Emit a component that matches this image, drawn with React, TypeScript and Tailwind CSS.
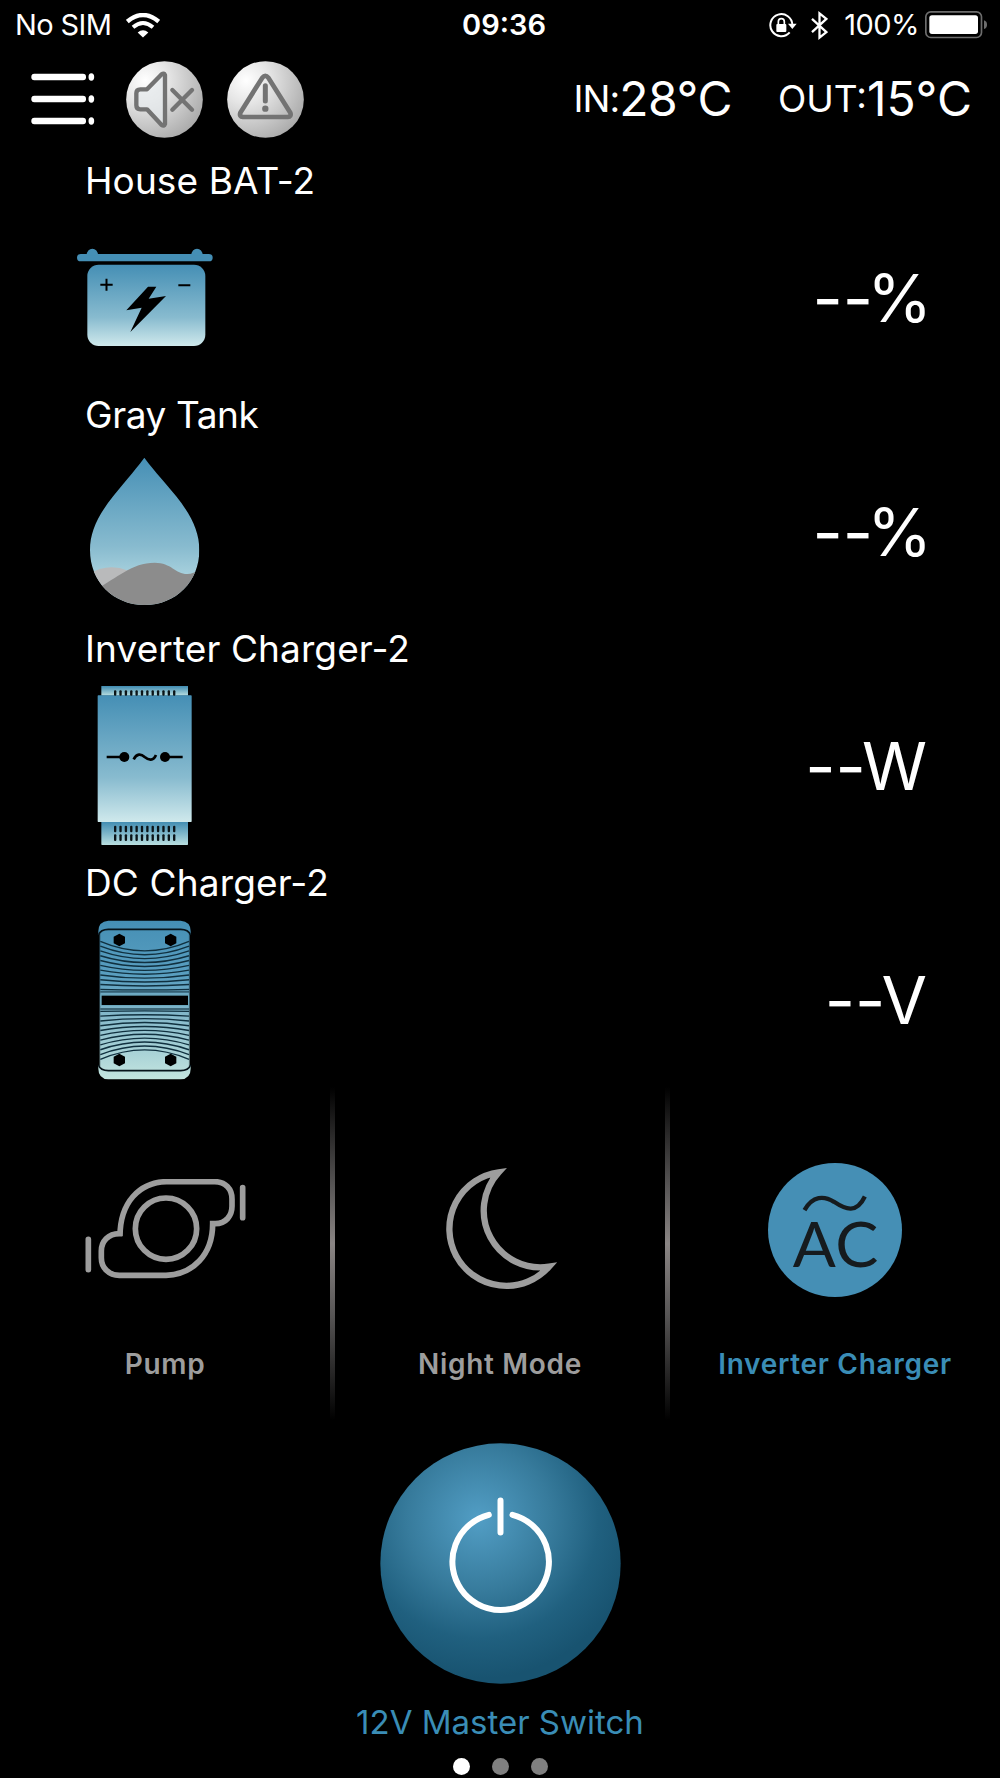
import type { ReactNode } from "react";

// --- Types ---
type Device = {
  name: string;
  unit: string;
  viewBox: string;
  icon: ReactNode;
  nameClass: string;
  unitClass: string;
};

const SLOTS = Array.from({ length: 12 }, (_, i) => 162 + i * 16.1);
const RIBS = Array.from({ length: 11 }, (_, i) => i);
const BOLTS = [
  [178, 240],
  [332, 240],
  [178, 600],
  [332, 600],
];

// --- Status bar icons ---
const WifiIcon = () => (
  <svg viewBox="0 0 102 74" className="ml-[15px] h-[25px] w-[34px]" fill="none" stroke="#fff">
    <path d="M4 25 Q51 -14 98 25" strokeWidth="13" />
    <path d="M21 42 Q51 17 81 42" strokeWidth="12" />
    <path d="M35 58 Q51 44 67 58 L51 73Z" fill="#fff" stroke="none" />
  </svg>
);

const RotationLockIcon = () => (
  <svg viewBox="0 0 84 78" className="h-[26px] w-[28px]" fill="none" stroke="#fff">
    <path d="M70 39 A33 33 0 1 0 62 61" strokeWidth="6" />
    <path d="M57 35 H83 L70 51Z" fill="#fff" stroke="none" />
    <rect x="22" y="36" width="30" height="24" rx="3" fill="#fff" stroke="none" />
    <path d="M28 38 V29 Q28 20 37 20 Q46 20 46 29 V38" strokeWidth="5" />
  </svg>
);

const BluetoothIcon = () => (
  <svg viewBox="0 0 52 88" className="h-[29px] w-[17px]" fill="none" stroke="#fff" strokeWidth="7">
    <path d="M3 24 L47 64 L26 81 V7 L47 24 L3 64" />
  </svg>
);

const BatteryIcon = () => (
  <svg viewBox="0 0 192 84" className="h-[28px] w-[64px]">
    <rect x="2.5" y="2.5" width="167" height="77" rx="15" fill="none" stroke="#6d6d6d" strokeWidth="5" />
    <rect x="13" y="13" width="146" height="56" rx="8" fill="#fff" />
    <path d="M177 28 Q186 31 186 41 Q186 51 177 54Z" fill="#6d6d6d" />
  </svg>
);

// --- Header icons ---
const MenuIcon = () => (
  <svg viewBox="0 0 192 156" className="h-[52px] w-[64px]" fill="#fff">
    {[12, 78, 144].map((y) => (
      <g key={y}>
        <rect x="1" y={y - 10} width="164" height="20" rx="9" />
        <ellipse cx="181" cy={y} rx="8.5" ry="11" />
      </g>
    ))}
  </svg>
);

const SilverDisc = ({ id, children }: { id: string; children: ReactNode }) => (
  <svg viewBox="0 0 231 231" className="h-[77px] w-[77px]">
    <defs>
      <radialGradient id={id} cx="0.25" cy="0.25" r="0.85">
        <stop offset="0" stopColor="#ffffff" />
        <stop offset="0.35" stopColor="#e6e6e6" />
        <stop offset="1" stopColor="#ababab" />
      </radialGradient>
    </defs>
    <circle cx="115.5" cy="115.5" r="115" fill={`url(#${id})`} />
    {children}
  </svg>
);

const MuteIcon = () => (
  <SilverDisc id="disc-mute">
    <g fill="none" stroke="#737373" strokeWidth="13" strokeLinejoin="round" strokeLinecap="round">
      <path
        fill="#e5eaec"
        fillOpacity="0.7"
        d="M31 97 Q31 85 43 85 H63 L107 40 Q114 35 117 42 V189 Q114 197 107 192 L63 145 H43 Q31 145 31 133Z"
      />
      <path d="M139 87 L198 146 M198 87 L139 146" />
    </g>
  </SilverDisc>
);

const WarningIcon = () => (
  <SilverDisc id="disc-warning">
    <g fill="none" stroke="#737373" strokeWidth="14" strokeLinejoin="round" strokeLinecap="round">
      <path d="M106 50 Q115 39 124 50 L190 155 Q194 167 182 168 H48 Q36 167 40 155Z" />
      <path d="M115 74 V120" strokeWidth="15" />
      <circle cx="115" cy="143" r="9.5" fill="#737373" stroke="none" />
    </g>
  </SilverDisc>
);

// --- Device icons ---
const BlueFade = ({ id }: { id: string }) => (
  <linearGradient id={id} x1="0" y1="0" x2="0" y2="1">
    <stop offset="0" stopColor="#458fb5" />
    <stop offset="0.65" stopColor="#88bbcf" />
    <stop offset="1" stopColor="#cfe9ec" />
  </linearGradient>
);

const HouseBattery = (
  <>
    <defs>
      <BlueFade id="battery-fill" />
    </defs>
    <g fill="#458fb5">
      <rect x="51" y="72" width="407" height="22" rx="11" />
      <path d="M80 76 A17 20 0 0 1 114 76Z M394 76 A17 20 0 0 1 428 76Z" />
    </g>
    <rect x="82" y="104" width="354" height="244" rx="34" fill="url(#battery-fill)" />
    <path d="M121 164 H158 M139.500 146 V182 M355 166 H391" stroke="#000" strokeWidth="6" />
    <path d="M264 170 H289 L266 206 L318 198 L211 306 L245 233 L199 241Z" />
  </>
);

const GrayTank = (
  <>
    <defs>
      <linearGradient id="tank-fill" x1="0" y1="0" x2="0" y2="1">
        <stop offset="0" stopColor="#458fb5" />
        <stop offset="0.6" stopColor="#88bbcf" />
        <stop offset="0.8" stopColor="#a9d2de" />
      </linearGradient>
      <clipPath id="tank-shape">
        <path d="M253 203 C218 250 190 280 160 318 C114 376 90 425 90 480 C90 575 160 645 254 645 C348 645 418 575 418 480 C418 425 394 376 348 318 C318 280 288 250 253 203Z" />
      </clipPath>
    </defs>
    <g clipPath="url(#tank-shape)">
      <rect x="80" y="200" width="350" height="450" fill="url(#tank-fill)" />
      <path d="M90 550 Q145 518 205 542 L150 620 H90Z" fill="#b9babb" />
      <path d="M110 596 C170 565 215 518 284 518 C335 518 345 552 382 552 Q400 552 420 538 V650 H110Z" fill="#8c8c8c" />
    </g>
  </>
);

const InverterCharger = (
  <>
    <defs>
      <BlueFade id="inverter-fill" />
      <linearGradient id="inverter-cap" x1="0" y1="0" x2="0" y2="1">
        <stop offset="0" stopColor="#3f8bb1" />
        <stop offset="1" stopColor="#b9dfe0" />
      </linearGradient>
    </defs>
    <rect x="124" y="198" width="260" height="29" fill="url(#inverter-cap)" />
    <rect x="124" y="604" width="260" height="71" rx="2" fill="url(#inverter-cap)" />
    <rect x="113" y="226" width="282" height="380" rx="2" fill="url(#inverter-fill)" />
    {SLOTS.map((x) => (
      <g key={x} fill="#0b1418">
        <rect x={x} y="211" width="7" height="16" rx="3" />
        <rect x={x} y="617" width="7" height="20" rx="3" />
        <rect x={x} y="643" width="7" height="20" rx="3" />
      </g>
    ))}
    <path d="M140 411 H190 M318 411 H368" stroke="#000" strokeWidth="8" />
    <circle cx="193" cy="411" r="15" />
    <circle cx="315" cy="411" r="15" />
    <path d="M221 418 C230 400 243 401 254 411 C266 421 280 424 288 405" fill="none" stroke="#000" strokeWidth="8" />
  </>
);

const DcCharger = (
  <>
    <defs>
      <linearGradient id="dc-fill" x1="0" y1="0" x2="0" y2="1">
        <stop offset="0" stopColor="#458fb5" />
        <stop offset="0.35" stopColor="#5a9fc0" />
        <stop offset="0.6" stopColor="#85b9cb" />
        <stop offset="1" stopColor="#c3e5df" />
      </linearGradient>
    </defs>
    <path
      fill="url(#dc-fill)"
      d="M145 182 H362 Q392 184 392 214 V222 H389 V617 H392 V626 Q392 656 362 658 H145 Q115 656 115 626 V617 H119 V222 H115 V214 Q115 184 145 182Z"
    />
    <g fill="none" stroke="#07141b" strokeWidth="5">
      <path d="M115 225 Q122 208 145 208 H362 Q385 208 392 225 M115 615 Q122 632 145 632 H362 Q385 632 392 615" />
      <path d="M120 220 V620 M388 220 V620" strokeWidth="2" opacity="0.5" />
    </g>
    <g fill="none" stroke="#10303f" strokeWidth="4.2">
      {RIBS.map((i) => {
        const edge = 244 + i * 14.4;
        const ctrl = 301 + i * 9;
        return (
          <g key={i}>
            <path d={`M121 ${edge} Q254 ${ctrl} 387 ${edge}`} />
            <path d={`M121 ${842 - edge} Q254 ${842 - ctrl} 387 ${842 - edge}`} />
          </g>
        );
      })}
      <path d="M121 395 H387 M121 447 H387" strokeWidth="6" opacity="0.6" />
    </g>
    <rect x="121" y="403" width="266" height="35" fill="#6aa7bd" />
    <rect x="125" y="407" width="259" height="28" />
    {BOLTS.map(([x, y]) => (
      <path key={`${x}-${y}`} d={`M${x} ${y - 19} l17 9.500 v19 l-17 9.500 l-17 -9.500 v-19Z`} />
    ))}
  </>
);

const devices: Device[] = [
  {
    name: "House BAT-2",
    unit: "%",
    viewBox: "0 -39 540 483",
    icon: HouseBattery,
    nameClass: "tracking-[0.1px]",
    unitClass: "-mr-[5px] -ml-[6px]",
  },
  {
    name: "Gray Tank",
    unit: "%",
    viewBox: "0 183 540 483",
    icon: GrayTank,
    nameClass: "tracking-[-0.4px]",
    unitClass: "-mr-[5px] -ml-[6px]",
  },
  {
    name: "Inverter Charger-2",
    unit: "W",
    viewBox: "0 195 540 483",
    icon: InverterCharger,
    nameClass: "tracking-[0.1px]",
    unitClass: "-ml-[4px]",
  },
  {
    name: "DC Charger-2",
    unit: "V",
    viewBox: "0 177 540 483",
    icon: DcCharger,
    nameClass: "tracking-[0.15px]",
    unitClass: "-ml-[4px]",
  },
];

const DeviceRow = ({ device }: { device: Device }) => (
  <section className="h-[234px]">
    <h2 className={`h-[73px] pl-[85px] text-[37px] leading-[74px] ${device.nameClass}`}>{device.name}</h2>
    <div className="flex h-[161px] items-center justify-between pr-[73px] pl-[60px]">
      <svg viewBox={device.viewBox} className="h-[161px] w-[180px]">
        {device.icon}
      </svg>
      <p className="flex text-[66px] leading-none">
        <span>--</span>
        <span className={device.unitClass}>{device.unit}</span>
      </p>
    </div>
  </section>
);

// --- Switch icons ---
const PumpIcon = () => (
  <svg viewBox="0 0 498 300" className="mr-[5px] h-[100px] w-[166px]" fill="none" stroke="#9d9d9d" strokeWidth="17">
    <path d="M126 164 H118 C84 164 64 188 64 216 V236 C64 266 86 289 118 289 H258 C337 287 398 228 398 134 H406 C438 134 456 110 456 82 V60 C456 30 436 8 404 8 H259 C178 10 120 70 120 172" />
    <circle cx="258" cy="149" r="92" />
    <path d="M25 181 V272 M488 26 V116" strokeLinecap="round" />
  </svg>
);

const MoonIcon = () => (
  <svg
    viewBox="142 265 330 363"
    className="ml-[4px] h-[121px] w-[110px] overflow-visible"
    fill="none"
    stroke="#9d9d9d"
    strokeWidth="19"
  >
    <path d="M448 558 A171 171 0 1 1 297 275 A170 170 0 0 0 448 558Z" strokeMiterlimit="10" />
  </svg>
);

const AcIcon = () => (
  <svg viewBox="233 126 404 404" className="mt-[1px] mr-[1px] h-[134px] w-[134px]">
    <circle cx="435" cy="328" r="202" fill="#458fb5" />
    <path d="M343 268 C368 224 402 224 432 243 C468 267 500 279 525 227" fill="none" stroke="#161b1e" strokeWidth="13" />
    <g fill="#161b1e" className="font-['Lato'] text-[184px]">
      <text x="308" y="440" textLength="130" lengthAdjust="spacingAndGlyphs">
        A
      </text>
      <text x="436" y="440" textLength="130" lengthAdjust="spacingAndGlyphs">
        C
      </text>
    </g>
  </svg>
);

const PowerIcon = () => (
  <svg
    viewBox="88 67 724 724"
    className="h-[241px] w-[241px]"
    fill="none"
    stroke="#fff"
    strokeWidth="18"
    strokeLinecap="round"
  >
    <defs>
      <radialGradient id="power-fill" gradientUnits="userSpaceOnUse" cx="385" cy="295" r="480">
        <stop offset="0" stopColor="#529ec5" />
        <stop offset="0.45" stopColor="#377b9c" />
        <stop offset="0.75" stopColor="#20607f" />
        <stop offset="1" stopColor="#185370" />
      </radialGradient>
    </defs>
    <circle cx="450" cy="429" r="361" fill="url(#power-fill)" stroke="none" />
    <path d="M415 283 A145 145 0 1 0 486 283 M450 240 V336" />
  </svg>
);

const Divider = () => (
  <div className="w-[5px] bg-[linear-gradient(to_bottom,#000_0%,#585656_30%,#8a8584_47%,#585656_68%,#000_100%)]" />
);

const SwitchCell = ({ label, color, children }: { label: string; color: string; children: ReactNode }) => (
  <button className="flex flex-1 flex-col items-center">
    <span className="flex h-[284px] items-center justify-center">{children}</span>
    <span className={`-mt-6 text-[28px] leading-[34px] font-semibold tracking-[0.7px] ${color}`}>{label}</span>
  </button>
);

export default function App() {
  return (
    <div className="flex h-[1778px] w-[1000px] flex-col overflow-hidden bg-black font-['Inter',sans-serif] text-white">
      {/* Status bar */}
      <div className="grid h-[50px] grid-cols-3 items-center pl-[15px] text-[29px]">
        <div className="flex items-center">
          <span className="tracking-[-0.6px]">No SIM</span>
          <WifiIcon />
        </div>
        <span className="pr-[7px] text-center font-semibold">09:36</span>
        <div className="flex items-center justify-end pr-[11px]">
          <RotationLockIcon />
          <span className="ml-[14px] flex">
            <BluetoothIcon />
          </span>
          <span className="ml-[16px] tracking-[-0.5px]">100%</span>
          <span className="ml-[6px]">
            <BatteryIcon />
          </span>
        </div>
      </div>

      {/* Header */}
      <header className="flex h-[94px] items-center pt-1 pr-[28px] pl-[31px]">
        <MenuIcon />
        <div className="ml-[31px] flex gap-[24px]">
          <MuteIcon />
          <WarningIcon />
        </div>
        <div className="ml-auto flex gap-[46px]">
          <p className="flex items-center">
            <span className="text-[37px] tracking-[-0.9px]">IN:</span>
            <span className="text-[48px] tracking-[-0.5px]">28°C</span>
          </p>
          <p className="flex items-center">
            <span className="text-[37px]">OUT:</span>
            <span className="text-[48px]">15°C</span>
          </p>
        </div>
      </header>

      {/* Devices */}
      <main>
        {devices.map((device) => (
          <DeviceRow key={device.name} device={device} />
        ))}
      </main>

      {/* Quick switches */}
      <div className="mt-[7px] flex h-[333px]">
        <SwitchCell label="Pump" color="text-[#9d9d9d]">
          <PumpIcon />
        </SwitchCell>
        <Divider />
        <SwitchCell label="Night Mode" color="text-[#9d9d9d]">
          <MoonIcon />
        </SwitchCell>
        <Divider />
        <SwitchCell label="Inverter Charger" color="text-[#3a8db6]">
          <AcIcon />
        </SwitchCell>
      </div>

      {/* Master switch */}
      <div className="flex flex-col items-center pt-[23px]">
        <PowerIcon />
        <span className="mt-[18px] text-[33px] leading-[40px] text-[#3a8db6]">12V Master Switch</span>
        <div className="mt-[16px] flex gap-[22px]">
          <i className="size-[17px] rounded-full bg-white" />
          <i className="size-[17px] rounded-full bg-[#808080]" />
          <i className="size-[17px] rounded-full bg-[#808080]" />
        </div>
      </div>
    </div>
  );
}
